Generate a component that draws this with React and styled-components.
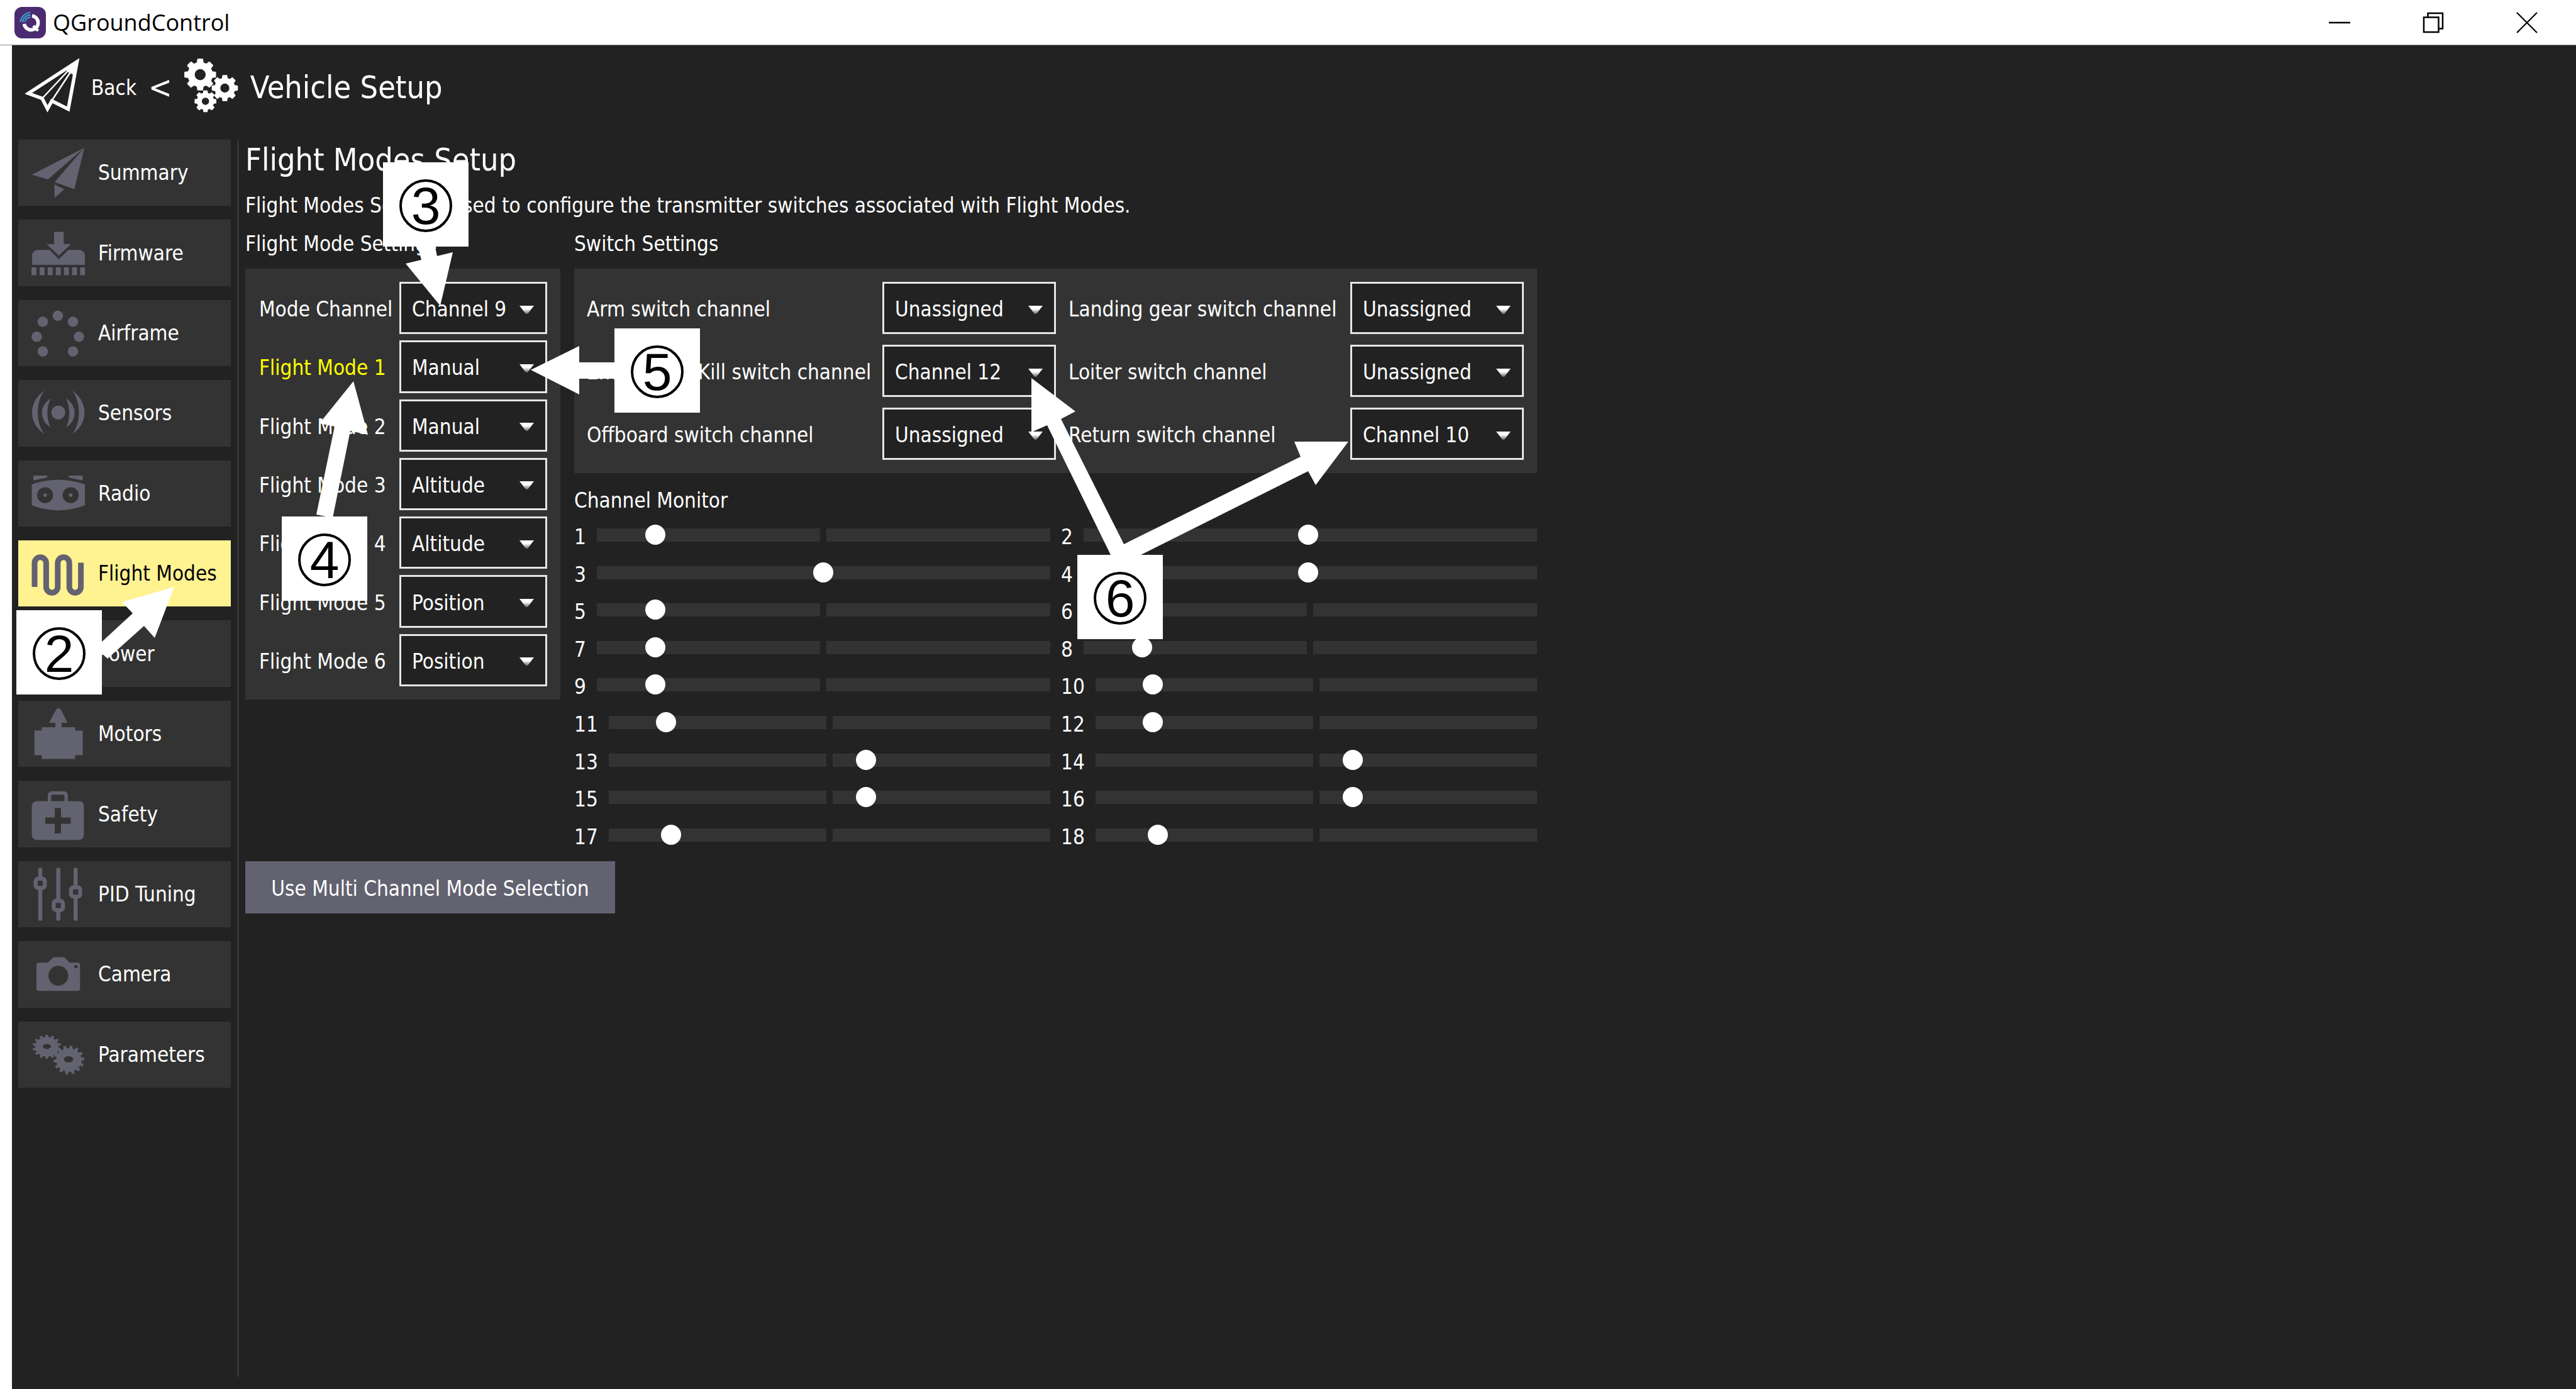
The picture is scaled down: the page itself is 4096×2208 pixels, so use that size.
import React, { useId, useState } from "react";
import styled, { createGlobalStyle } from "styled-components";

const color = {
  window: "#222222",
  panel: "#333333",
  accent: "#626270",
  highlight: "#fff291",
  text: "#ffffff",
};

const uiFont = `"DejaVu Sans Condensed", "DejaVu Sans", sans-serif`;

const GlobalStyle = createGlobalStyle`
  * { box-sizing: border-box; }
  body {
    margin: 0;
    background: #ffffff;
    color: ${color.text};
    font-family: ${uiFont};
    font-size: 33px;
    line-height: 41px;
  }
  button, select, input { font: inherit; margin: 0; border-radius: 0; }
`;

const AppFrame = styled.div`
  position: relative;
  display: flex;
  flex-direction: column;
  min-height: 100vh;
  overflow: hidden;
`;

/* ---- title bar ---- */

const TitleBar = styled.header`
  display: flex;
  align-items: center;
  height: 72px;
  padding: 0 4px 0 23px;
  gap: 11px;
  background: #ffffff;
  border-bottom: 1px solid #8a8a8a;
`;

const AppTitle = styled.span`
  flex: 1;
  color: #000000;
  font-family: "Open Sans", "Noto Sans", sans-serif;
  font-size: 36px;
  line-height: 50px;
`;

const WindowControls = styled.div`
  display: flex;
`;

const WindowButton = styled.button`
  display: flex;
  align-items: center;
  justify-content: center;
  width: 149px;
  height: 70px;
  padding: 0;
  border: 0;
  background: transparent;
`;

/* ---- window body ---- */

const WindowBody = styled.div`
  flex: 1;
  display: flex;
  flex-direction: column;
  margin-left: 19px;
  background: ${color.window};
`;

const Toolbar = styled.div`
  display: flex;
  align-items: center;
  gap: 19px;
  height: 135px;
  margin-bottom: 15px;
  padding-left: 21px;
`;

const BackButton = styled.button`
  display: flex;
  align-items: center;
  gap: 19px;
  padding: 0;
  border: 0;
  background: transparent;
  color: inherit;
`;

const ToolbarIcon = styled.svg`
  display: block;
  width: 86px;
  height: 86px;
  margin-bottom: 7px;
`;

const ToolbarTitle = styled.span`
  font-size: 50px;
  line-height: 65px;
`;

const Main = styled.div`
  flex: 1;
  display: flex;
  align-items: stretch;
  padding: 0 0 19px 10px;
`;

const Sidebar = styled.nav`
  align-self: flex-start;
  display: grid;
  grid-template-rows: repeat(12, 1fr);
  gap: 22px;
  width: 338px;
  height: 1507px;
`;

const NavButton = styled.button`
  display: flex;
  align-items: center;
  gap: 21px;
  padding: 0 0 0 21px;
  border: 0;
  background: ${(p) => (p.$active ? color.highlight : color.panel)};
  color: ${(p) => (p.$active ? "#000000" : color.text)};
  text-align: left;
  white-space: nowrap;
`;

const NavIcon = styled.svg`
  flex: none;
  width: 85px;
  height: 85px;
  fill: ${color.accent};
`;

const Divider = styled.div`
  width: 3px;
  margin: 0 10px;
  background: ${color.panel};
`;

const Page = styled.main`
  flex: 1;
  display: flex;
  flex-direction: column;
  align-items: flex-start;
`;

const PageTitle = styled.h1`
  margin: 0;
  font-size: 50px;
  font-weight: 400;
  line-height: 65px;
`;

const Description = styled.p`
  margin: 19px 0 20px;
`;

const Columns = styled.div`
  display: flex;
  align-items: flex-start;
  gap: 22px;
`;

const SectionTitle = styled.h2`
  margin: ${(p) => (p.$spaced ? "23px 0 5px" : "0 0 19px")};
  font-size: 33px;
  font-weight: 400;
`;

const ModePanel = styled.div`
  display: grid;
  grid-template-columns: 223px 235px;
  grid-template-rows: repeat(7, 1fr);
  row-gap: 10px;
  height: 685px;
  padding: 21px 21px 21px 22px;
  background: ${color.panel};
`;

const SwitchPanel = styled.div`
  display: grid;
  grid-template-columns: 450px 276px 428px 276px;
  grid-auto-rows: 83px;
  gap: 17px 20px;
  padding: 21px 21px 21px 20px;
  background: ${color.panel};
`;

const FieldLabel = styled.label`
  align-self: center;
  padding-top: 4px;
  color: ${(p) => (p.$active ? "#ffff00" : "inherit")};
  white-space: nowrap;
`;

const SelectBox = styled.div`
  position: relative;
  display: flex;
`;

const Select = styled.select`
  appearance: none;
  width: 100%;
  padding: 4px 0 0 17px;
  border: 3px solid #e6e6e6;
  background: ${color.window};
  color: ${color.text};
`;

const SelectArrow = styled.svg`
  position: absolute;
  right: 21px;
  top: 50%;
  width: 23px;
  height: 13px;
  margin-top: -4px;
  pointer-events: none;
`;

const Monitor = styled.div`
  display: grid;
  grid-template-columns: 1fr 1fr;
  grid-template-rows: repeat(9, 1fr);
  column-gap: 17px;
  height: 536px;
`;

const MonitorRow = styled.div`
  display: flex;
  align-items: center;
  gap: 17px;
`;

const MonitorLabel = styled.label`
  padding-top: 6px;
`;

const MonitorBar = styled.input`
  appearance: none;
  flex: 1;
  min-width: 0;
  height: 32px;
  background: transparent;

  &::-webkit-slider-runnable-track {
    height: 21px;
    background: linear-gradient(
      90deg,
      ${color.panel} calc(50% - 5px),
      ${color.window} calc(50% - 5px) calc(50% + 5px),
      ${color.panel} calc(50% + 5px)
    );
  }
  &::-webkit-slider-thumb {
    appearance: none;
    width: 32px;
    height: 32px;
    margin-top: -6px;
    border: 0;
    border-radius: 50%;
    background: #ffffff;
  }
`;

const PrimaryButton = styled.button`
  width: 588px;
  height: 83px;
  margin-top: 12px;
  padding: 4px 0 0;
  border: 0;
  background: ${color.accent};
  color: ${color.text};
`;

/* ---- numbered callouts over the window ---- */

const ArrowLayer = styled.svg`
  position: absolute;
  left: 0;
  top: 0;
  width: 2200px;
  height: 1100px;
  fill: #ffffff;
  pointer-events: none;
`;

const Badge = styled.div`
  position: absolute;
  left: ${(p) => p.$x}px;
  top: ${(p) => p.$y}px;
  display: flex;
  align-items: center;
  justify-content: center;
  width: 136px;
  height: 134px;
  padding-top: 4px;
  background: #ffffff;
`;

const BadgeNumber = styled.span`
  display: flex;
  align-items: center;
  justify-content: center;
  width: 84px;
  height: 84px;
  border: 4px solid #000000;
  border-radius: 50%;
  color: #000000;
  font-family: "Liberation Sans", Arial, sans-serif;
  font-size: 84px;
  line-height: 76px;
`;

/* ---- drawings ---- */

function gearPath(cx, cy, rx, ry, teeth, depth, turn = 0) {
  const step = (Math.PI * 2) / teeth;
  const pts = [];
  for (let i = 0; i < teeth; i++) {
    const a = i * step + turn;
    [[-0.3, depth], [-0.19, 1], [0.19, 1], [0.3, depth]].forEach(([o, k]) => {
      const t = a + o * step;
      pts.push(`${(cx + Math.sin(t) * rx * k).toFixed(2)} ${(cy - Math.cos(t) * ry * k).toFixed(2)}`);
    });
  }
  return `M${pts.join("L")}Z`;
}

function ellipsePath(cx, cy, rx, ry = rx) {
  return `M${cx - rx} ${cy}a${rx} ${ry} 0 1 0 ${rx * 2} 0a${rx} ${ry} 0 1 0 ${-rx * 2} 0Z`;
}

function AppLogo() {
  return (
    <svg width="50" height="50" viewBox="0 0 50 50" fill="none" aria-hidden="true">
      <rect width="50" height="50" rx="12" fill="#4b2b6f" />
      <path d="M28 14.200A11.200 11.200 0 1 1 15.400 27" stroke="#fff" strokeWidth="5.500" />
      <path d="M30 30L37.500 38" stroke="#fff" strokeWidth="4.500" />
      <path d="M9.500 24A16.500 16.500 0 0 1 25.500 9M13 24A12.500 12.500 0 0 1 25.500 12.800M16.500 24A9 9 0 0 1 25.500 16.500" stroke="#3f9fd2" strokeWidth="2.200" />
    </svg>
  );
}

const navIcons = {
  summary: (
    <path d="M84 3L0.500 45.700L26.300 53.300ZM84 3L36.800 57.600L68.300 68.700ZM36.500 61L52 69L36.800 82.500Z" />
  ),
  firmware: (
    <>
      <path d="M36 8.500H51.300V28H63L43.500 46.200L24 28H36Z" />
      <path d="M10 37.200H28.800L43.500 52.200L58.500 37.200H76A9 9 0 0 1 85 46.200V61H1V46.200A9 9 0 0 1 10 37.200Z" />
      {[0, 1, 2, 3, 4, 5, 6].map((i) => (
        <rect key={i} x={i * 12.9} y="65" width="8" height="12.500" rx="1" />
      ))}
    </>
  ),
  airframe: [[42, 15], [18, 24.5], [66, 24.5], [8.4, 48.3], [75.5, 48.3], [18, 71.7], [66, 71.7]].map(([x, y]) => (
    <circle key={`${x}-${y}`} cx={x} cy={y} r="8.300" />
  )),
  sensors: (
    <>
      <circle cx="42.700" cy="41.700" r="11" />
      <path d="M31 19.600C12 30 12 55 31 65.500C23.500 54 23.500 31 31 19.600ZM21 6.800C-5.700 24 -5.700 60 21 76C6.500 60 6.500 24 21 6.800ZM54.500 19.600C73.500 30 73.500 55 54.500 65.500C62 54 62 31 54.500 19.600ZM64.500 6.800C91 24 91 60 64.500 76C79 60 79 24 64.500 6.800Z" />
    </>
  ),
  radio: (
    <>
      <path d="M3 14H26L24 17.500L3 21.700ZM58.500 14H81.500V21.700L61 17.500Z" />
      <path
        fillRule="evenodd"
        d={`M0.500 28Q42.500 13 85 28V61.300Q42.500 77.500 0.500 61.300Z${ellipsePath(21.7, 45.1, 12.7)}${ellipsePath(62.4, 45.1, 12.7)}`}
      />
      <circle cx="21.700" cy="45.100" r="2.800" />
      <circle cx="62.400" cy="45.100" r="2.800" />
    </>
  ),
  flightModes: (
    <path
      fill="none"
      stroke={color.accent}
      strokeWidth="9"
      d="M5 64V26a9.200 9.200 0 0 1 18.400 0V64a9.200 9.200 0 0 0 18.400 0V26a9.200 9.200 0 0 1 18.400 0V64a9.200 9.200 0 0 0 18.400 0V25.500"
    />
  ),
  power: <path d="M14 20H26V12H34V20H51V12H59V20H71V74H14Z" />,
  motors: (
    <>
      <path d="M39.500 3.500Q43 -0.500 46.500 3.500L57.500 25H48V33H38V25H28Z" />
      <path d="M16.500 32H69.500V37.300H81.500V76.500H69.500V82.500H16.500V76.500H4.700V37.300H16.500Z" />
    </>
  ),
  safety: (
    <>
      <path fill="none" stroke={color.accent} strokeWidth="5.500" d="M28.700 24V13Q28.700 8.500 33 8.500H51Q55.200 8.500 55.200 13V24" />
      <path
        fillRule="evenodd"
        d="M9 21.600H75Q83.500 21.600 83.500 31V74Q83.500 83.200 75 83.200H9Q0.500 83.200 0.500 74V31Q0.500 21.600 9 21.600ZM37 32.500V47.500H22V57.500H37V72.700H47V57.500H62.500V47.500H47V32.500Z"
      />
    </>
  ),
  pid: (
    <g fill="none" stroke={color.accent} strokeWidth="6.500" strokeLinecap="round">
      <path d="M14 3.500V17.500M14 33V81.500M42.700 3.500V52.500M42.700 68V81.500M70.200 3.500V31M70.200 47V81.500" />
      <rect x="6.700" y="17.800" width="14.600" height="14.600" rx="4" />
      <rect x="35.400" y="53.100" width="14.600" height="14.600" rx="4" />
      <rect x="62.900" y="31.600" width="14.600" height="14.600" rx="4" />
    </g>
  ),
  camera: (
    <path
      fillRule="evenodd"
      d={`M12 24.200H26L34 16.500Q35 15.600 36.500 15.600H50.500Q52 15.600 53 16.500L61 24.200H73.500Q77.300 24.200 77.300 28V65.500Q77.300 69.300 73.500 69.300H12Q8 69.300 8 65.500V28Q8 24.200 12 24.200Z${ellipsePath(42.7, 45.1, 15.8)}${ellipsePath(70.8, 30.5, 2.8)}`}
    />
  ),
  parameters: (
    <>
      <path fillRule="evenodd" d={`${gearPath(24.5, 30, 23, 19, 14, 0.82)}${ellipsePath(24.5, 29.5, 6.5, 4)}`} />
      <path fillRule="evenodd" d={`${gearPath(59.5, 51, 24.5, 23, 14, 0.82, 0.15)}${ellipsePath(59, 50, 7.5, 5)}`} />
    </>
  ),
};

const navItems = [
  ["summary", "Summary"],
  ["firmware", "Firmware"],
  ["airframe", "Airframe"],
  ["sensors", "Sensors"],
  ["radio", "Radio"],
  ["flightModes", "Flight Modes"],
  ["power", "Power"],
  ["motors", "Motors"],
  ["safety", "Safety"],
  ["pid", "PID Tuning"],
  ["camera", "Camera"],
  ["parameters", "Parameters"],
];

const channels = ["Unassigned", ...Array.from({ length: 18 }, (_, i) => `Channel ${i + 1}`)];
const modes = ["Unassigned", "Manual", "Altitude", "Position", "Mission", "Hold", "Return"];

const modeFields = [
  ["Mode Channel", "Channel 9", channels],
  ["Flight Mode 1", "Manual", modes],
  ["Flight Mode 2", "Manual", modes],
  ["Flight Mode 3", "Altitude", modes],
  ["Flight Mode 4", "Altitude", modes],
  ["Flight Mode 5", "Position", modes],
  ["Flight Mode 6", "Position", modes],
];

const switchFields = [
  ["Arm switch channel", "Unassigned"],
  ["Landing gear switch channel", "Unassigned"],
  ["Emergency Kill switch channel", "Channel 12"],
  ["Loiter switch channel", "Unassigned"],
  ["Offboard switch channel", "Unassigned"],
  ["Return switch channel", "Channel 10"],
];

const channelValues = [112, 495, 499, 495, 112, 112, 112, 112, 112, 112, 112, 112, 587, 587, 587, 587, 124, 124];

const badges = [
  { n: 2, x: 26, y: 970 },
  { n: 3, x: 609, y: 258 },
  { n: 4, x: 448, y: 821 },
  { n: 5, x: 977, y: 522 },
  { n: 6, x: 1713, y: 882 },
];

const arrows = [
  "277,933 246,1014 229,995 171,1047 160,1037 160,1022 211,975 194,957",
  "663,388 691,388 695,407 720,401 700,486 645,419 670,413",
  "562,606 585,691 557,685 529,823 503,818 532,678 508,673",
  "844,588 921,550 921,576 980,576 980,602 921,602 921,627",
  "1640,601 1710,654 1687,666 1787,865 2068,726 2058,702 2144,702 2092,771 2080,749 1810,884 1767,884 1665,676 1640,687",
];

function SelectField({ label, value, options, active }) {
  const id = useId();
  const [current, setCurrent] = useState(value);
  return (
    <>
      <FieldLabel htmlFor={id} $active={active}>{label}</FieldLabel>
      <SelectBox>
        <Select id={id} value={current} onChange={(e) => setCurrent(e.target.value)}>
          {options.map((o) => <option key={o}>{o}</option>)}
        </Select>
        <SelectArrow viewBox="0 0 23 13" aria-hidden="true">
          <defs>
            <linearGradient id={`${id}-fade`} x1="0" y1="0" x2="0" y2="1">
              <stop offset="0.4" stopColor="#fff" />
              <stop offset="1" stopColor="#666" />
            </linearGradient>
          </defs>
          <path d="M0 0H23L13 13H10Z" fill={`url(#${id}-fade)`} />
        </SelectArrow>
      </SelectBox>
    </>
  );
}

function Channel({ number, value }) {
  const id = useId();
  return (
    <MonitorRow>
      <MonitorLabel htmlFor={id}>{number}</MonitorLabel>
      <MonitorBar id={id} type="range" min="0" max="1000" value={value} readOnly />
    </MonitorRow>
  );
}

export default function App() {
  return (
    <AppFrame>
      <GlobalStyle />
      <TitleBar>
        <AppLogo />
        <AppTitle>QGroundControl</AppTitle>
        <WindowControls>
          <WindowButton aria-label="Minimize">
            <svg width="34" height="34" viewBox="0 0 34 34" stroke="#000" strokeWidth="2.500"><path d="M0 17H34" /></svg>
          </WindowButton>
          <WindowButton aria-label="Restore">
            <svg width="34" height="34" viewBox="0 0 34 34" stroke="#000" strokeWidth="2.500" fill="none"><path d="M8.500 8V2H32V26.500H26M2 8.500H25.500V32H2Z" /></svg>
          </WindowButton>
          <WindowButton aria-label="Close">
            <svg width="34" height="34" viewBox="0 0 34 34" stroke="#000" strokeWidth="2.200"><path d="M1 1L33 33M33 1L1 33" /></svg>
          </WindowButton>
        </WindowControls>
      </TitleBar>

      <WindowBody>
        <Toolbar>
          <BackButton>
            <ToolbarIcon viewBox="0 0 86 86" fill="none" stroke="#fff" aria-hidden="true">
              <path d="M82.500 5L5 55.500L27 63.500L35.500 80L42.500 67.500L68.500 80.500Z" strokeWidth="5.500" />
              <path d="M79 8L27 63.500M81 8L42 67.500" strokeWidth="2.500" />
              <path d="M82 4L66 20L76 25Z" fill="#fff" strokeWidth="1" />
            </ToolbarIcon>
            Back
          </BackButton>
          <ToolbarTitle>&lt;</ToolbarTitle>
          <ToolbarIcon viewBox="0 0 86 86" fill="#fff" stroke="#fff" strokeWidth="2" strokeLinejoin="round" fillRule="evenodd" aria-hidden="true">
            <path d={`${gearPath(25.3, 25.6, 24.5, 24.5, 8, 0.78)}${ellipsePath(25.3, 25.6, 9.8)}`} />
            <path d={`${gearPath(64.5, 47, 20, 20, 8, 0.78)}${ellipsePath(64.5, 47, 8.2)}`} />
            <path d={`${gearPath(33.7, 68, 16.5, 16.5, 8, 0.78)}${ellipsePath(33.7, 68, 6.8)}`} />
          </ToolbarIcon>
          <ToolbarTitle>Vehicle Setup</ToolbarTitle>
        </Toolbar>

        <Main>
          <Sidebar>
            {navItems.map(([key, label]) => (
              <NavButton key={key} $active={key === "flightModes"}>
                <NavIcon viewBox="0 0 85 85" aria-hidden="true">{navIcons[key]}</NavIcon>
                {label}
              </NavButton>
            ))}
          </Sidebar>
          <Divider />
          <Page>
            <PageTitle>Flight Modes Setup</PageTitle>
            <Description>
              Flight Modes Setup is used to configure the transmitter switches associated with Flight Modes.
            </Description>
            <Columns>
              <section>
                <SectionTitle>Flight Mode Settings</SectionTitle>
                <ModePanel>
                  {modeFields.map(([label, value, options]) => (
                    <SelectField key={label} label={label} value={value} options={options} active={label === "Flight Mode 1"} />
                  ))}
                </ModePanel>
              </section>
              <section>
                <SectionTitle>Switch Settings</SectionTitle>
                <SwitchPanel>
                  {switchFields.map(([label, value]) => (
                    <SelectField key={label} label={label} value={value} options={channels} />
                  ))}
                </SwitchPanel>
                <SectionTitle $spaced>Channel Monitor</SectionTitle>
                <Monitor>
                  {channelValues.map((value, i) => (
                    <Channel key={i} number={i + 1} value={value} />
                  ))}
                </Monitor>
              </section>
            </Columns>
            <PrimaryButton>Use Multi Channel Mode Selection</PrimaryButton>
          </Page>
        </Main>
      </WindowBody>

      <ArrowLayer viewBox="0 0 2200 1100" aria-hidden="true">
        {arrows.map((points) => <polygon key={points} points={points} />)}
      </ArrowLayer>
      {badges.map(({ n, x, y }) => (
        <Badge key={n} $x={x} $y={y}><BadgeNumber>{n}</BadgeNumber></Badge>
      ))}
    </AppFrame>
  );
}
